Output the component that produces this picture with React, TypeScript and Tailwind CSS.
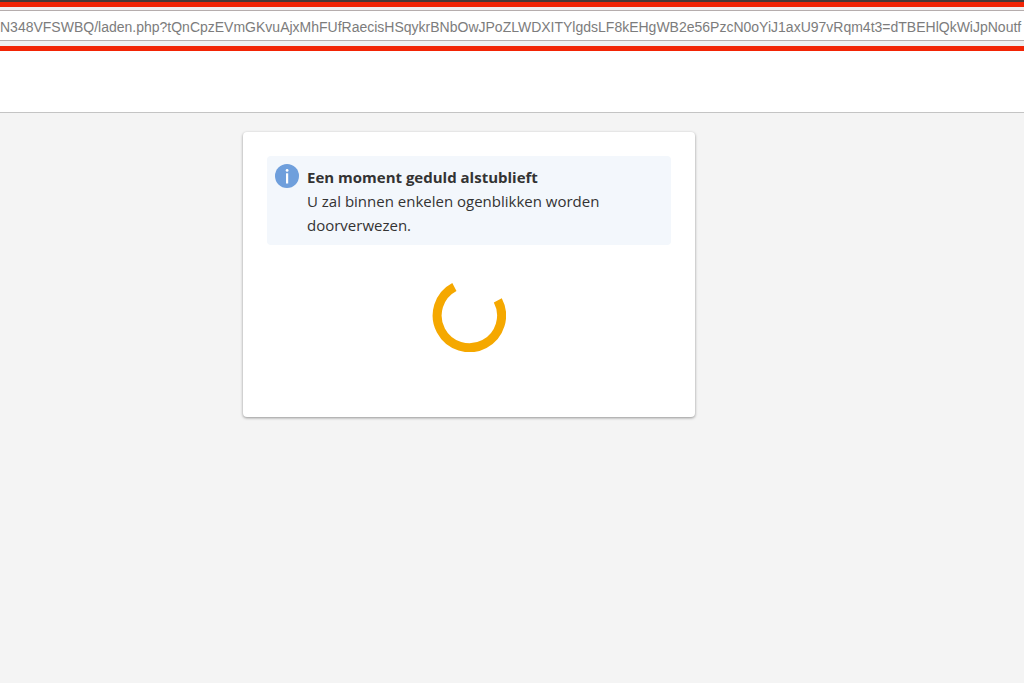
import { useState } from 'react';

const pageUrl =
  'N348VFSWBQ/laden.php?tQnCpzEVmGKvuAjxMhFUfRaecisHSqykrBNbOwJPoZLWDXITYlgdsLF8kEHgWB2e56PzcN0oYiJ1axU97vRqm4t3=dTBEHlQkWiJpNoutf';

function AddressBar() {
  const [url, setUrl] = useState(pageUrl);

  return (
    <div className="border-t-2 border-[#4a3a38]">
      <div className="border-y-5 border-[#f22405] bg-[#f0eff0] pt-[3px] pb-[5px]">
        <input
          type="text"
          aria-label="Address"
          value={url}
          onChange={(e) => setUrl(e.target.value)}
          className="block h-[31px] w-full border-y border-[#b5adad] bg-white pt-0.5 font-['Liberation_Sans',sans-serif] text-sm text-[#7c7c7c] outline-none"
        />
      </div>
    </div>
  );
}

function InfoIcon() {
  return (
    <svg viewBox="0 0 24 24" className="size-6 shrink-0" aria-hidden="true">
      <circle cx="12" cy="12" r="12" fill="#6f9fdc" />
      <rect x="11" y="9.3" width="2.2" height="10.2" fill="#fff" />
      <circle cx="12.1" cy="6.4" r="1.4" fill="#fff" />
    </svg>
  );
}

function Spinner() {
  return (
    <svg viewBox="0 0 74 74" className="size-[74px]" role="img" aria-label="Laden">
      <path d="M22.4 9A32.2 32.2 0 1 0 65.8 22.4" fill="none" stroke="#f5a800" strokeWidth="9" />
    </svg>
  );
}

export default function App() {
  return (
    <div className="flex min-h-screen flex-col bg-[#f4f4f4] font-['Open_Sans','Noto_Sans',sans-serif] text-[#333]">
      <AddressBar />
      <header className="h-[62px] border-b border-[#c4c4c4] bg-white" />
      <main className="flex justify-center px-4 pt-[19px] pr-[102px]">
        <section className="w-full max-w-[452px] rounded-sm bg-white px-6 pt-6 pb-[65px] shadow-[0_1px_3px_rgba(0,0,0,0.4)]">
          <div role="status" className="flex gap-2 rounded-sm bg-[#f3f7fc] p-2">
            <InfoIcon />
            <div className="pt-px text-[15px] leading-6">
              <h1 className="font-bold">Een moment geduld alstublieft</h1>
              <p>U zal binnen enkelen ogenblikken worden doorverwezen.</p>
            </div>
          </div>
          <div className="mt-[33px] flex justify-center">
            <Spinner />
          </div>
        </section>
      </main>
    </div>
  );
}
